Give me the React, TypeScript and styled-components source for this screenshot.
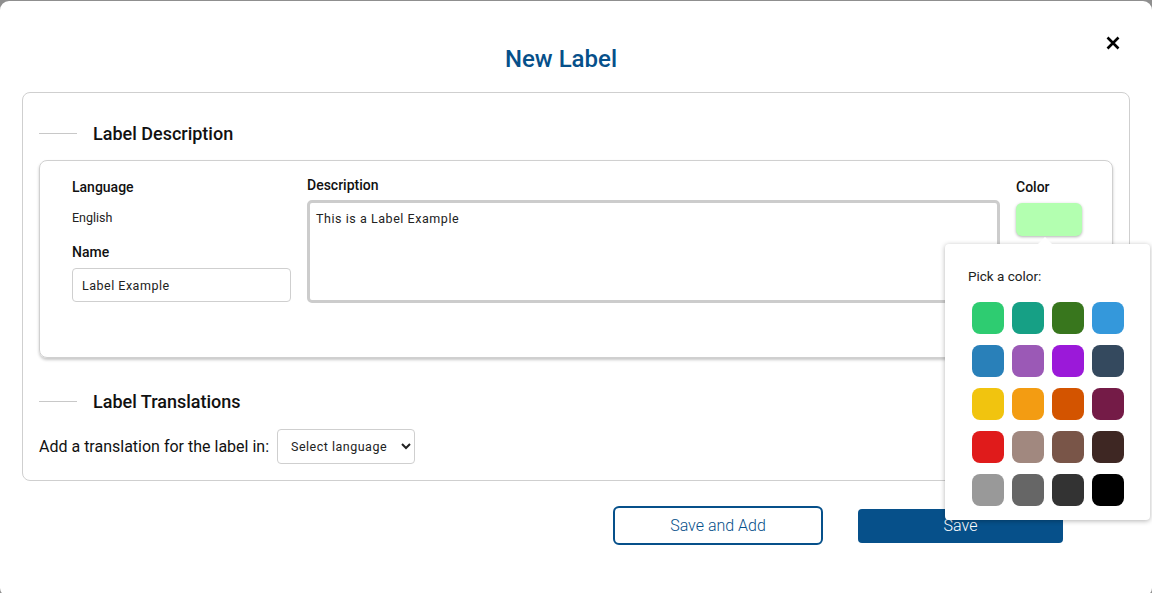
import React from "react";
import styled, { createGlobalStyle } from "styled-components";

const Global = createGlobalStyle`
  html, body { margin: 0; padding: 0; }
  body {
    background: #8f8f8f;
    font-family: Roboto, "Noto Sans", Arial, sans-serif;
    color: #111;
    overflow: hidden;
  }
`;

const Modal = styled.div`
  margin-top: 1px;
  height: 596px;
  background: #fff;
  border-radius: 9px;
  display: flex;
  flex-direction: column;
  box-sizing: border-box;
`;

const Header = styled.div`
  display: flex;
  align-items: center;
  padding: 0 24px 8px 22px;
  height: 91px;
  box-sizing: border-box;
`;

const Title = styled.h1`
  flex: 1;
  margin: 0;
  text-align: center;
  font-size: 24px;
  font-weight: 500;
  color: #06508a;
  padding-top: 32px;
  padding-left: 2px;
`;

const CloseButton = styled.button`
  width: 30px;
  height: 30px;
  border: none;
  background: none;
  padding: 0;
  display: flex;
  align-items: center;
  justify-content: center;
  cursor: pointer;
`;

const Card = styled.div`
  margin: 0 22px;
  border: 1px solid #cfcfcf;
  border-radius: 8px;
  padding: 30px 16px 16px 16px;
`;

const SectionHeading = styled.div<{ $top?: number }>`
  display: flex;
  align-items: center;
  gap: 16px;
  margin-top: ${(p) => p.$top ?? 0}px;
  font-size: 18px;
  font-weight: 500;
  height: 20px;
  &::before {
    content: "";
    width: 38px;
    height: 1px;
    background: #c8c8c8;
  }
`;

const InnerCard = styled.div`
  margin-top: 17px;
  border: 1px solid #d0d0d0;
  border-radius: 8px;
  box-shadow: 0 2px 3px rgba(0, 0, 0, 0.22);
  padding: 18px 30px 54px 32px;
  display: flex;
  gap: 16px;
`;

const LeftCol = styled.div`
  width: 219px;
  display: flex;
  flex-direction: column;
`;

const FieldLabel = styled.label<{ $mt?: number }>`
  display: block;
  font-size: 14px;
  font-weight: 500;
  line-height: 16px;
  margin-top: ${(p) => p.$mt ?? 0}px;
`;

const Value = styled.div`
  font-size: 12.5px;
  line-height: 16px;
  margin-top: 15px;
  color: #222;
`;

const TextInput = styled.input`
  margin-top: 8px;
  height: 34px;
  box-sizing: border-box;
  border: 1px solid #cfcfcf;
  border-radius: 4px;
  padding: 0 9px;
  font-family: Roboto, sans-serif;
  font-size: 12.5px;
  letter-spacing: 0.5px;
  color: #222;
  outline: none;
`;

const DescCol = styled.div`
  flex: 1;
  display: flex;
  flex-direction: column;
  margin-top: -2px;
`;

const TextArea = styled.textarea`
  margin-top: 7px;
  height: 103px;
  box-sizing: border-box;
  border: 3px solid #cccccc;
  border-radius: 5px;
  padding: 8px 6px;
  font-family: Roboto, sans-serif;
  font-size: 12.5px;
  letter-spacing: 0.55px;
  color: #222;
  resize: none;
  outline: none;
`;

const ColorCol = styled.div`
  width: 66px;
  position: relative;
`;

const ColorPreview = styled.div<{ $c: string }>`
  margin-top: 8px;
  width: 66px;
  height: 33px;
  border-radius: 6px;
  background: ${(p) => p.$c};
  box-shadow: 0 1px 3px rgba(0, 0, 0, 0.3);
`;

const Popover = styled.div`
  position: absolute;
  left: -71px;
  top: 65px;
  width: 205px;
  background: #fff;
  border-radius: 4px;
  box-shadow: 0 1px 5px rgba(0, 0, 0, 0.3);
  padding: 24px 26px 14px 23px;
  box-sizing: border-box;
  z-index: 5;
  &::before {
    content: "";
    position: absolute;
    top: -7px;
    left: 93px;
    border-left: 7px solid transparent;
    border-right: 7px solid transparent;
    border-bottom: 7px solid #fff;
  }
`;

const PopTitle = styled.div`
  font-size: 13.5px;
  line-height: 16px;
  color: #222;
`;

const SwatchGrid = styled.div`
  margin-top: 18px;
  margin-left: 4px;
  display: grid;
  grid-template-columns: repeat(4, 32px);
  column-gap: 8px;
  row-gap: 11px;
`;

const Swatch = styled.div<{ $c: string }>`
  width: 32px;
  height: 32px;
  border-radius: 8px;
  background: ${(p) => p.$c};
`;

const TranslateRow = styled.div`
  margin-top: 18px;
  display: flex;
  align-items: center;
  gap: 8px;
  font-size: 16px;
`;

const Select = styled.select`
  width: 138px;
  height: 35px;
  border: 1px solid #cfcfcf;
  border-radius: 4px;
  background: #fff;
  padding: 0 9px;
  font-family: Roboto, sans-serif;
  font-size: 12.5px;
  letter-spacing: 0.5px;
  color: #222;
`;

const Footer = styled.div`
  display: flex;
  justify-content: flex-end;
  align-items: center;
  gap: 35px;
  padding-right: 89px;
  margin-top: 25px;
`;

const Button = styled.button<{ $primary?: boolean }>`
  box-sizing: border-box;
  width: ${(p) => (p.$primary ? 205 : 210)}px;
  height: ${(p) => (p.$primary ? 34 : 39)}px;
  border-radius: ${(p) => (p.$primary ? 4 : 6)}px;
  border: ${(p) => (p.$primary ? "none" : "2px solid #06508a")};
  background: ${(p) => (p.$primary ? "#06508a" : "#fff")};
  color: ${(p) => (p.$primary ? "#fff" : "#06508a")};
  font-family: Roboto, sans-serif;
  font-weight: 300;
  font-size: 16px;
`;

const swatches = [
  "#2ecc71", "#16a085", "#38761d", "#3498db",
  "#2980b9", "#9b59b6", "#9b19d9", "#34495e",
  "#f1c40f", "#f39c12", "#d35400", "#741b47",
  "#e01b1b", "#a1887f", "#795548", "#3e2723",
  "#999999", "#666666", "#333333", "#000000",
];

export default function App() {
  return (
    <>
      <Global />
      <Modal>
        <Header>
          <Title>New Label</Title>
          <CloseButton aria-label="close">
            <svg width="14" height="14" viewBox="0 0 14 14">
              <path d="M1.5 1.5 L12.5 12.5 M12.5 1.5 L1.5 12.5" stroke="#000" strokeWidth="2.6" />
            </svg>
          </CloseButton>
        </Header>
        <Card>
          <SectionHeading>Label Description</SectionHeading>
          <InnerCard>
            <LeftCol>
              <FieldLabel>Language</FieldLabel>
              <Value>English</Value>
              <FieldLabel $mt={18}>Name</FieldLabel>
              <TextInput defaultValue="Label Example" />
            </LeftCol>
            <DescCol>
              <FieldLabel>Description</FieldLabel>
              <TextArea defaultValue="This is a Label Example" />
            </DescCol>
            <ColorCol>
              <FieldLabel>Color</FieldLabel>
              <ColorPreview $c="#b3ffb0" />
              <Popover>
                <PopTitle>Pick a color:</PopTitle>
                <SwatchGrid>
                  {swatches.map((c) => (
                    <Swatch key={c} $c={c} />
                  ))}
                </SwatchGrid>
              </Popover>
            </ColorCol>
          </InnerCard>
          <SectionHeading $top={33}>Label Translations</SectionHeading>
          <TranslateRow>
            <span>Add a translation for the label in:</span>
            <Select defaultValue="">
              <option value="">Select language</option>
            </Select>
          </TranslateRow>
        </Card>
        <Footer>
          <Button>Save and Add</Button>
          <Button $primary>Save</Button>
        </Footer>
      </Modal>
    </>
  );
}
